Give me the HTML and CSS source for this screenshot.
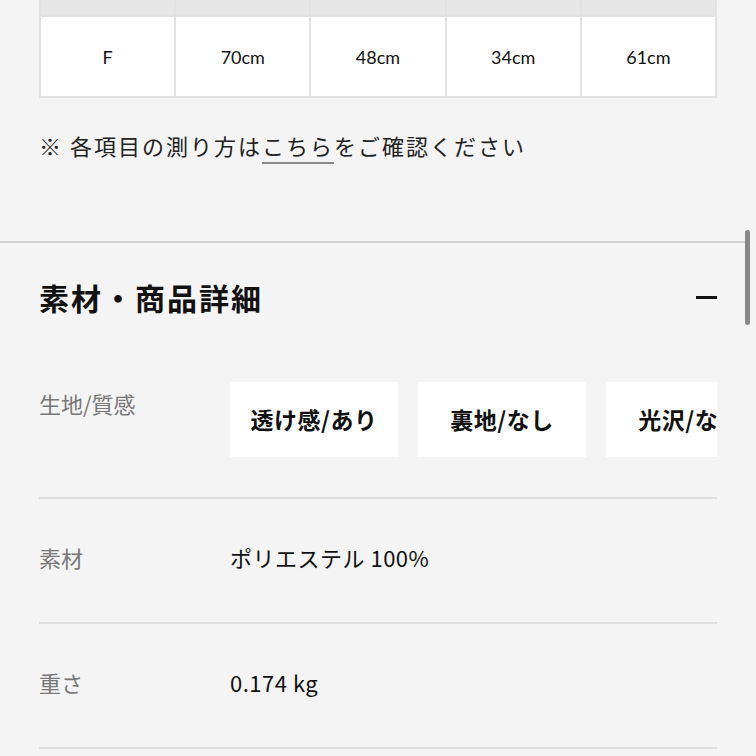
FILE: index.html
```html
<!DOCTYPE html>
<html>
<head>
    <link rel="stylesheet" href="styles.css">
</head>
<body>
<div class="page">
    <div class="size-block">
        <table class="size-table">
            <tr class="head">
                <th></th><th></th><th></th><th></th><th></th>
            </tr>
            <tr>
                <td>F</td>
                <td>70cm</td>
                <td>48cm</td>
                <td>34cm</td>
                <td>61cm</td>
            </tr>
        </table>
        <p class="note">※ 各項目の測り方は<a class="link">こちら</a>をご確認ください</p>
    </div>

    <div class="section">
        <div class="section-head">
            <h2>素材・商品詳細</h2>
            <span class="minus"></span>
        </div>

        <div class="row row-chips">
            <div class="label">生地/質感</div>
            <div class="chips">
                <div class="chip">透け感/あり</div>
                <div class="chip">裏地/なし</div>
                <div class="chip">光沢/なし</div>
            </div>
        </div>
        <div class="row">
            <div class="label">素材</div>
            <div class="value">ポリエステル 100%</div>
        </div>
        <div class="row">
            <div class="label">重さ</div>
            <div class="value">0.174 kg</div>
        </div>
    </div>

    <div class="scrollbar"></div>
</div>
</body>
</html>
```

FILE: styles.css
```css
body {
    margin: 0;
    padding: 0;
    background-color: #f4f4f4;
    font-family: "Noto Sans CJK JP", "Noto Sans", sans-serif;
    color: #111;
}

.page {
    position: relative;
    width: 756px;
    height: 756px;
    overflow: hidden;
}

.size-block {
    padding: 0 39px;
}

.size-table {
    width: 678px;
    border-collapse: collapse;
    table-layout: fixed;
}

.size-table th,
.size-table td {
    border: 2px solid #e2e2e2;
    text-align: center;
    font-family: "Lato", "Noto Sans CJK JP", sans-serif;
    font-size: 18px;
    font-weight: normal;
}

.size-table th {
    background-color: #e6e6e6;
    height: 15px;
    border-top: none;
    padding: 0;
}

.size-table td {
    background-color: #fff;
    height: 78px;
    padding: 1px 0 0;
}

.note {
    margin: 33px 0 0;
    font-size: 22px;
    line-height: 28px;
    letter-spacing: 2px;
    color: #222;
}

.link {
    text-decoration: underline;
    text-decoration-color: #888;
    text-underline-offset: 7px;
}

.section {
    margin-top: 82px;
    border-top: 2px solid #d2d2d2;
    margin-right: 10px;
}

.section-head {
    display: flex;
    justify-content: space-between;
    align-items: center;
    padding: 34px 29px 0 39px;
    height: 40px;
}

.section-head h2 {
    margin: 0;
    font-size: 30px;
    font-weight: bold;
    letter-spacing: 2px;
}

.minus {
    width: 21px;
    height: 3px;
    background-color: #111;
}

.row {
    display: flex;
    align-items: center;
    margin: 0 29px 0 39px;
    height: 115px;
    padding-bottom: 8px;
    border-bottom: 2px solid #dedede;
}

.row-chips {
    align-items: flex-start;
    height: 115px;
    padding-top: 65px;
    padding-bottom: 0;
}

.label {
    width: 191px;
    flex-shrink: 0;
    font-size: 22px;
    line-height: 32px;
    color: #777;
}

.row-chips .label {
    padding-top: 5px;
}

.value {
    font-size: 22px;
    letter-spacing: 0.5px;
    color: #111;
}

.chips {
    display: flex;
    gap: 20px;
    overflow: hidden;
    flex: 1;
}

.chip {
    flex-shrink: 0;
    width: 168px;
    height: 75px;
    line-height: 75px;
    background-color: #fff;
    text-align: center;
    font-size: 23px;
    font-weight: bold;
    letter-spacing: 0.5px;
    white-space: nowrap;
}

.scrollbar {
    position: absolute;
    left: 745px;
    top: 230px;
    width: 5px;
    height: 95px;
    border-radius: 3px;
    background-color: #888;
}
```
